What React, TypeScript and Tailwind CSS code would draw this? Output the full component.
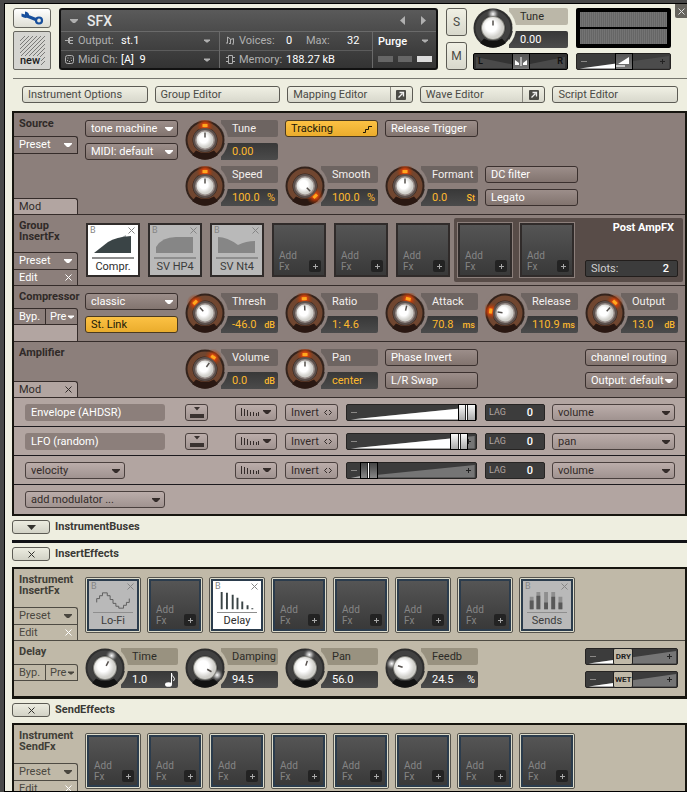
import { useId, useState } from 'react';
import type { ReactNode } from 'react';
import clsx from 'clsx';

const controlTones = {
  group: 'border-[#3a302e] bg-linear-to-b from-[#9c8e8a] to-[#82746f] text-white',
  mod: 'border-[#4a403e] bg-linear-to-b from-[#bbadaa] to-[#a09390] text-[#332b29]',
  cream: 'border-[#5c5b54] bg-linear-to-b from-[#f0f0e4] to-[#d8d8cc] text-[#4a4a45]',
  amber: 'border-[#4a3a20] bg-linear-to-b from-[#fcc244] to-[#eaac2c] text-[#201808]'
};

function Arrow({ className }: { className?: string }) {
  return (
    <svg className={clsx('h-1 w-2 shrink-0', className)} viewBox="0 0 8 4" fill="currentColor">
      <path d="M0 0h8v1L5 4H3L0 1z" />
    </svg>
  );
}

function Cross({ className }: { className?: string }) {
  return (
    <svg className={clsx('size-[7px] shrink-0', className)} viewBox="0 0 7 7" fill="none" stroke="currentColor">
      <path d="M.5.5l6 6M6.500.5l-6 6" />
    </svg>
  );
}

function Select({ label, options, tone, className }: {
  label: string;
  options: string[];
  tone: 'group' | 'mod';
  className?: string;
}) {
  return (
    <div className={clsx('relative h-[17px]', controlTones[tone], 'rounded-[3px] border', className)}>
      <select
        aria-label={label}
        className="block h-full w-full appearance-none bg-transparent pl-[5px] pr-3 leading-[15px] outline-none"
      >
        {options.map(o => <option key={o} className="text-black">{o}</option>)}
      </select>
      <Arrow className="pointer-events-none absolute right-1 top-[6px]" />
    </div>
  );
}

function PushButton({ children, tone, className, label }: {
  children: ReactNode;
  tone: keyof typeof controlTones;
  className?: string;
  label?: string;
}) {
  return (
    <button
      type="button"
      aria-label={label}
      className={clsx('flex h-[17px] items-center rounded-[3px] border px-[5px] text-left whitespace-nowrap', controlTones[tone], className)}
    >
      {children}
    </button>
  );
}

/* Rotary controls */

function Dial({ angle, dark }: { angle: number; dark?: boolean }) {
  const id = useId();
  return (
    <svg className="size-10" viewBox="0 0 40 40">
      <defs>
        <radialGradient id={`${id}g`}>
          <stop offset="0" stopColor={dark ? '#ffffff' : '#ff6a10'} />
          <stop offset="0.400" stopColor={dark ? '#b8b8b8' : '#d84008'} stopOpacity="0.800" />
          <stop offset="1" stopColor={dark ? '#444' : '#8a3a10'} stopOpacity="0" />
        </radialGradient>
        <radialGradient id={`${id}c`} cx="0.420" cy="0.420">
          <stop offset="0.500" stopColor="#ffffff" />
          <stop offset="1" stopColor="#d0cfca" />
        </radialGradient>
      </defs>
      <circle cx="20" cy="20" r="19.500" fill={dark ? '#2e2e2e' : '#33231c'} />
      <circle cx="20" cy="20" r="15" fill="none" stroke={dark ? '#414141' : '#704630'} strokeWidth="5" />
      <path d="M11 30.500L7 35q13 9.500 26 0l-4-4.500q-9 5-18 0z" fill={dark ? '#121212' : '#2a1812'} />
      <g transform={`rotate(${angle} 20 20)`}>
        <circle cx="20" cy="6" r={dark ? 6.5 : 9} fill={`url(#${id}g)`} />
        {!dark && <rect x="17.500" y="4" width="5" height="3" fill="#ffa81e" />}
      </g>
      <circle cx="20" cy="20" r="12" fill={dark ? '#85857f' : '#5c504c'} />
      <circle cx="20" cy="20" r={dark ? 11 : 10} fill={dark ? `url(#${id}c)` : '#968c88'} />
      {!dark && <circle cx="20" cy="20" r="8.500" fill={`url(#${id}c)`} />}
      <path d="M20 17.500v-5" stroke="#55504d" strokeWidth="1.500" transform={`rotate(${angle} 20 20)`} />
    </svg>
  );
}

interface KnobProps {
  name: string;
  value: string;
  unit?: ReactNode;
  angle: number;
  tone?: 'group' | 'rack' | 'master';
  className?: string;
}

function Knob({ name, value, unit, angle, tone = 'group', className }: KnobProps) {
  const id = useId();
  const group = tone === 'group';
  return (
    <div className={clsx('relative h-10 w-full', className)}>
      <div className="flex h-full flex-col justify-between pl-9">
        <label
          htmlFor={id}
          className={clsx('flex h-[17px] items-center rounded-r-xs pl-[11px]',
            group && 'bg-[#6d6461] text-[#f4f0ee]',
            tone === 'rack' && 'bg-[#999280] text-[#2c2b27]',
            tone === 'master' && 'bg-[#bbb7a8] text-[#2c2b27]')}
        >
          {name}
        </label>
        <output
          htmlFor={id}
          className={clsx('flex h-[17px] items-center justify-between rounded-r-xs bg-linear-to-b from-[#383838] to-[#4b4b4b] pl-[11px] pr-[3px] whitespace-nowrap',
            group ? 'text-[#fdb92e]' : 'text-white')}
        >
          {value}
          {unit && <span>{unit}</span>}
        </output>
      </div>
      <div
        className={clsx('absolute top-0 left-0 size-10 rounded-full',
          group && 'shadow-[0_0_0_3px_#8c7f7b]',
          tone === 'rack' && 'shadow-[0_0_0_3px_#c0b9a8]',
          tone === 'master' && 'shadow-[0_0_0_3px_#eeeee0]')}
      >
        <Dial angle={angle} dark={!group} />
        <input
          id={id}
          type="range"
          min={-145}
          max={145}
          defaultValue={angle}
          className="absolute inset-0 size-full cursor-pointer opacity-0"
        />
      </div>
    </div>
  );
}

const small = (text: string) => <span className="text-[9px] font-medium">{text}</span>;

/* Faders */

function Fader({ name, start, cap, children, flat }: {
  name: string;
  start: number;
  cap: string;
  children: ReactNode;
  flat?: boolean;
}) {
  const [pos, setPos] = useState(start);
  const edge = 4 + pos * 0.92;
  return (
    <div className="relative h-[17px] w-full rounded-xs border border-[#262423] bg-[#3c3c3c]">
      <svg className="block size-full" viewBox="0 0 100 15" preserveAspectRatio="none">
        <path d="M3 14.500L99 2v12.500z" fill={flat ? '#4c4c4c' : '#757575'} />
        <path d={`M3 14.500L${edge} ${14.5 - (edge - 3) * 0.13}V14.500z`} fill="#fff" />
      </svg>
      <svg className="absolute top-1 left-1 size-[7px]" viewBox="0 0 7 7" stroke="#8a8886">
        <path d="M0 3.500h6" />
      </svg>
      <svg className="absolute top-1 right-1 size-[7px]" viewBox="0 0 7 7" stroke="#222">
        <path d="M1 3.500h5M3.500 1v5" />
      </svg>
      <div
        className={clsx('absolute -inset-y-px flex -translate-x-1/2 items-center justify-center', cap)}
        style={{ left: `${pos}%` }}
      >
        {children}
      </div>
      <input
        type="range"
        aria-label={name}
        value={pos}
        onChange={e => setPos(Number(e.target.value))}
        className="absolute inset-0 size-full cursor-pointer opacity-0"
      />
    </div>
  );
}

function PanFader() {
  return (
    <div className="relative h-[17px] w-full rounded-xs border border-black bg-[#333]">
      <svg className="block size-full" viewBox="0 0 93 15" preserveAspectRatio="none">
        <path d="M2 3L46 12 91 3v11H2z" fill="#4a4a4a" />
      </svg>
      <span className="absolute top-0 left-1 text-[9px] leading-[15px] font-bold text-[#111]">L</span>
      <span className="absolute top-0 right-1 text-[9px] leading-[15px] font-bold text-[#111]">R</span>
      <div className="absolute -inset-y-px left-1/2 w-[18px] -translate-x-1/2 border border-black bg-linear-to-b from-[#555] to-[#777]">
        <svg className="block size-full" viewBox="0 0 16 15">
          <path d="M8 3v9" stroke="#fff" />
          <path d="M2 6l4 3v2H2zM14 6l-4 3v2h4z" fill="#fff" />
        </svg>
      </div>
      <input type="range" aria-label="Pan" className="absolute inset-0 size-full cursor-pointer opacity-0" />
    </div>
  );
}

/* Effect slots */

const art: Record<string, ReactNode> = {
  'Compr.': (
    <>
      <path d="M7 20L20 11 38 2v3l5-1v16z" fill="#aab0b0" />
      <path d="M6 20L20 9Q28 4 43 3v17z" fill="#3a4446" />
    </>
  ),
  'SV HP4': <path d="M6 20v-6Q12 4 26 4h17v16z" fill="#868686" />,
  'SV Nt4': <path d="M6 20V4Q15 4 26 12q8-4 17-4v12z" fill="#868686" />,
  'Lo-Fi': <path d="M8 14v-4h3V7h3V4h5v3h3v4h3v4h3v3h3v2h5v-3h3v-3h3v-4" fill="none" stroke="#5c5c5c" />,
  Delay: <path d="M9 3v18M14.500 4v17M20.500 6v15M25.500 9v12M30.500 13v8M36 17v4M41 20v1" fill="none" stroke="#3a4446" strokeWidth="2" />,
  Sends: (
    <>
      <path d="M9 8v13M16 3v18M24 3v18M31.500 3v18M39 8v13" fill="none" stroke="#8e8e8e" strokeWidth="4" />
      <path d="M9 12v9M16 7v14M24 14v7M31.500 8v13M39 14v7" fill="none" stroke="#585858" strokeWidth="4" />
    </>
  )
};

function Slot({ fx, lit, framed }: { fx?: string; lit?: boolean; framed?: boolean }) {
  const body = fx ? (
    <div className={clsx('relative flex h-full flex-col', lit ? 'bg-white text-[#2c2c2c]' : 'bg-[#b9b9b9] text-[#3c3c3c]')}>
      <button type="button" aria-label={`Bypass ${fx}`} className="absolute top-px left-[2px] text-[9px] leading-2 text-[#858585]">B</button>
      <button type="button" aria-label={`Remove ${fx}`} className="absolute top-[2px] right-[3px] text-[#858585]"><Cross /></button>
      <svg className="mt-2 h-6 w-full" viewBox="0 0 50 24">{art[fx]}</svg>
      <div className={clsx('mx-1 border-[#8e8e8e]', framed ? 'border-t' : 'border-t-2')} />
      <span className="flex-1 text-center leading-4">{fx}</span>
    </div>
  ) : (
    <button
      type="button"
      className="flex size-full items-end justify-between bg-linear-to-b from-[#555] to-[#393939] pr-[3px] pb-[3px] pl-[5px] text-left text-[10px] leading-[11px] text-[#858585]"
    >
      <span><span className="block">Add</span><span className="block">Fx</span></span>
      <span className="flex size-3 items-center justify-center rounded-xs bg-[#232323] text-[#a8a8a8]">
        <svg className="size-[7px]" viewBox="0 0 7 7" stroke="currentColor"><path d="M1 3.500h5M3.500 1v5" /></svg>
      </span>
    </button>
  );
  if (framed) {
    return (
      <div className="size-14 shrink-0 rounded-xs border border-[#55534c] bg-[#dddccb] p-px">
        <div className="size-full border-2 border-[#2b3c4d]">{body}</div>
      </div>
    );
  }
  return <div className="size-[54px] shrink-0 border-2 border-[#302b2a]">{body}</div>;
}

/* Section frame with the heading column on the left */

const edgeTones = {
  group: 'border-[#352c2a] text-white',
  rack: 'border-[#4e4b43] text-[#4a473f]'
};

function Section({ title, tone, head, foot, children }: {
  title: ReactNode;
  tone: 'group' | 'rack';
  head?: ReactNode;
  foot?: ReactNode;
  children: ReactNode;
}) {
  return (
    <section className={clsx('flex border-b last:border-b-0', edgeTones[tone])}>
      <div className="flex w-16 shrink-0 flex-col">
        <h3
          className={clsx('pt-[5px] pl-[5px] text-[11px] leading-[11px] font-bold whitespace-nowrap',
            tone === 'group' ? 'text-[#302a28]' : 'text-[#403e37]')}
        >
          {title}
        </h3>
        {head}
        <div className="mt-auto">{foot}</div>
      </div>
      <div className="min-w-0 flex-1">{children}</div>
    </section>
  );
}

function PresetTab({ tone }: { tone: 'group' | 'rack' }) {
  return (
    <div className={clsx('relative h-[17px] rounded-tr-[3px] border-t border-r', edgeTones[tone])}>
      <select aria-label="Preset" className="block size-full appearance-none bg-transparent pl-[5px] leading-4 outline-none">
        <option>Preset</option>
      </select>
      <Arrow className="pointer-events-none absolute top-[6px] right-[5px]" />
    </div>
  );
}

function EditTab({ tone }: { tone: 'group' | 'rack' }) {
  return (
    <button type="button" className={clsx('flex h-4 w-full items-center justify-between border-t border-r pr-[5px] pl-[5px]', edgeTones[tone])}>
      Edit
      <Cross className="text-white" />
    </button>
  );
}

function ModTab({ closable }: { closable?: boolean }) {
  return (
    <button type="button" className="flex h-4 w-full items-center justify-between rounded-tr-[3px] border-t border-r border-[#352c2a] bg-[#b2a5a1] px-[5px] text-[#302a28]">
      Mod
      {closable && <Cross />}
    </button>
  );
}

function BypassTabs({ tone }: { tone: 'group' | 'rack' }) {
  return (
    <div className={clsx('flex h-[17px] rounded-tr-[3px] border border-l-0', edgeTones[tone])}>
      <button type="button" className="w-8 border-r border-inherit pl-[5px] text-left">Byp.</button>
      <button type="button" className="flex flex-1 items-center justify-between pr-[3px] pl-1">
        Pre
        <Arrow className="w-[6px]" />
      </button>
    </div>
  );
}

function Controls({ children }: { children: ReactNode }) {
  return <div className="grid grid-cols-6 gap-x-[7px] gap-y-[6px] px-[7px] pt-[7px] pb-2">{children}</div>;
}

function Stack({ children, className }: { children: ReactNode; className?: string }) {
  return <div className={clsx('flex h-10 flex-col justify-between', className)}>{children}</div>;
}

/* Modulation routing rows */

interface Modulator {
  source: string;
  editable: boolean;
  amount: number;
  target: string;
}

const modulators: Modulator[] = [
  { source: 'Envelope (AHDSR)', editable: false, amount: 93, target: 'volume' },
  { source: 'LFO (random)', editable: false, amount: 87, target: 'pan' },
  { source: 'velocity', editable: true, amount: 17, target: 'volume' }
];

function ModRow({ mod }: { mod: Modulator }) {
  const lagId = useId();
  return (
    <div className="flex h-[29px] items-center border-b border-[#1c1a1e] pr-[10px] pl-[11px]">
      <div className="w-[140px] shrink-0">
        {mod.editable
          ? <Select label="Modulator source" tone="mod" options={[mod.source]} className="w-[100px]" />
          : <div className="h-[17px] rounded-[3px] bg-[#8c7f7b] pl-[6px] leading-[17px] text-white">{mod.source}</div>}
      </div>
      <div className="ml-5 w-[23px] shrink-0">
        {!mod.editable && (
          <PushButton tone="mod" label="Show modulator" className="w-full px-0!">
            <svg className="size-full" viewBox="0 0 21 15" fill="#3a3230">
              <path d="M8 2h6l-3 3.500zM4 9h14v4H4z" />
            </svg>
          </PushButton>
        )}
      </div>
      <PushButton tone="mod" label="Shaper" className="ml-[27px] w-[42px] shrink-0 justify-between">
        <svg className="h-2 w-[18px]" viewBox="0 0 18 8" stroke="currentColor">
          <path d="M.5 0v8M3.500 1v7M6.500 2v6M9.500 4v4M12.500 4v4M15.500 5v3M17.500 4v4" />
        </svg>
        <Arrow />
      </PushButton>
      <PushButton tone="mod" className="ml-2 w-[53px] shrink-0 justify-between">
        Invert
        <svg className="h-[7px] w-2" viewBox="0 0 8 7" fill="none" stroke="currentColor">
          <path d="M3 1L.5 3.500 3 6M5 1l2.500 2.500L5 6" />
        </svg>
      </PushButton>
      <div className="ml-2 min-w-0 flex-1">
        <Fader
          name={`${mod.source} amount`}
          start={mod.amount}
          cap={clsx('w-[18px] border border-black bg-linear-to-b', mod.amount > 50 ? 'from-[#fafafa] to-[#aaa]' : 'from-[#444] to-[#888]')}
        >
          <span className="h-full w-[3px] border-x border-[#222] bg-white" />
        </Fader>
      </div>
      <div className="ml-2 flex h-[17px] w-[60px] shrink-0 items-center rounded-xs border border-[#262423] bg-[#3c3c3c] px-[3px]">
        <label htmlFor={lagId} className="text-[9px] text-[#b2a5a1]">LAG</label>
        <input id={lagId} defaultValue="0" className="w-full min-w-0 bg-transparent pr-2 text-right font-medium text-white outline-none" />
      </div>
      <Select label="Modulation target" tone="mod" options={[mod.target]} className="ml-[7px] w-[123px] shrink-0" />
    </div>
  );
}

function RackHeading({ title, open }: { title: string; open?: boolean }) {
  return (
    <div className="flex items-center gap-[5px] pt-1 pb-[6px] pl-[7px]">
      <button
        type="button"
        aria-label={`Toggle ${title}`}
        className="flex h-[14px] w-[38px] items-center justify-center rounded-[3px] border border-[#5c5b54] bg-linear-to-b from-[#ecece0] to-[#d2d2c6] text-[#33322e]"
      >
        {open ? <Cross /> : <svg className="h-[5px] w-[9px]" viewBox="0 0 9 5" fill="currentColor"><path d="M0 0h9L4.500 5z" /></svg>}
      </button>
      <h2 className="leading-[14px] font-bold text-[#3a3935]">{title}</h2>
    </div>
  );
}

function Header() {
  return (
    <header className="ml-2 flex h-[75px] border-b border-[#77776f] pt-1 pr-4">
      <div className="flex h-[62px] w-[38px] shrink-0 flex-col gap-[3px]">
        <button type="button" aria-label="Edit instrument" className="flex h-5 items-center justify-center rounded-[3px] border border-[#66665f] bg-linear-to-b from-white to-[#deded4]">
          <svg className="h-[14px] w-6" viewBox="0 0 24 14" fill="none" stroke="#174f9c">
            <path d="M7 5l10 4" strokeWidth="3" />
            <circle cx="19" cy="9.500" r="3" strokeWidth="2.200" />
            <path d="M1.500 2.500L5 3.500 5 .5Q9.500 1 9 5 6.500 8.500 1.500 5.500z" fill="#174f9c" stroke="none" />
          </svg>
        </button>
        <button type="button" className="relative h-[39px] rounded-xs border border-[#66665f] bg-[#d4d4d0] text-[#1c1c1c]">
          <svg className="absolute top-1 left-[6px] h-[29px] w-[26px]" viewBox="0 0 26 29" stroke="#7a7a78">
            <path d="M0 5l5-5M0 9l9-9M0 13L13 0M0 17L17 0M0 21L21 0M4 21L25 0M8 21L25 4M12 21L25 8M16 21l9-9M20 21l5-5M21 25l4-4M21 29l4-4" />
          </svg>
          <span className="absolute bottom-[3px] left-[6px] bg-[#d4d4d0] leading-[10px] font-medium">new</span>
        </button>
      </div>

      <div className="ml-2 flex h-[62px] min-w-0 flex-1 flex-col rounded-[3px] border-2 border-[#111] bg-linear-to-b from-[#5a5a5a] to-[#333] text-[#b0b0b0]">
        <div className="flex h-[21px] items-center pr-[10px] pl-[9px]">
          <Arrow />
          <h1 className="ml-[9px] text-[14px] leading-4 font-medium text-[#e8e8e8]">SFX</h1>
          <button type="button" aria-label="Previous instrument" className="ml-auto">
            <svg className="h-[9px] w-[5px]" viewBox="0 0 5 9" fill="currentColor"><path d="M5 0v9L0 4.500z" /></svg>
          </button>
          <button type="button" aria-label="Next instrument" className="ml-4">
            <svg className="h-[9px] w-[5px]" viewBox="0 0 5 9" fill="currentColor"><path d="M0 0v9l5-4.500z" /></svg>
          </button>
        </div>
        <div className="flex flex-1 border-t border-[#6a6a6a]">
          <div className="flex min-w-0 flex-1 flex-col">
            <div className="relative flex flex-1 items-center border-b border-[#5c5c5c] pl-1">
              <svg className="size-[9px]" viewBox="0 0 9 9" stroke="currentColor" fill="none">
                <path d="M0 4.500h3M8 1.500H4.500v6H8M4.500 4.500H8M3.500 2v5" />
              </svg>
              <label htmlFor="output" className="ml-1 w-[43px]">Output:</label>
              <select id="output" className="min-w-0 flex-1 appearance-none text-white outline-none"><option>st.1</option></select>
              <Arrow className="pointer-events-none absolute top-[7px] right-[9px] w-[6px]" />
            </div>
            <div className="relative flex flex-1 items-center pl-1">
              <svg className="size-[9px]" viewBox="0 0 9 9" fill="none" stroke="currentColor">
                <rect x=".5" y=".5" width="8" height="8" rx="2" />
                <path d="M3 2.500v1M6 2.500v1M2.500 5v1M6.500 5v1M4.500 6v1" />
              </svg>
              <label htmlFor="midi" className="ml-1 w-[43px] whitespace-nowrap">Midi Ch:</label>
              <select id="midi" className="min-w-0 flex-1 appearance-none text-white outline-none"><option>[A]&nbsp; 9</option></select>
              <Arrow className="pointer-events-none absolute top-[7px] right-[9px] w-[6px]" />
            </div>
          </div>
          <div className="flex w-[153px] flex-col border-l border-[#6a6a6a]">
            <div className="flex flex-1 items-center border-b border-[#5c5c5c] pl-[6px]">
              <svg className="size-[9px]" viewBox="0 0 9 9" stroke="currentColor" fill="none">
                <path d="M1.500 7V1l3 2v4M4.500 3.500l3-1v5M0 7h2M3 7.500h2M6 8h2" />
              </svg>
              <span className="ml-1 w-[47px]">Voices:</span>
              <span className="w-5 text-white">0</span>
              <span className="w-[41px]">Max:</span>
              <span className="text-white">32</span>
            </div>
            <div className="flex flex-1 items-center pl-[6px]">
              <svg className="size-[9px]" viewBox="0 0 9 9" stroke="currentColor" fill="none">
                <path d="M2.500.5h4v8h-4zM0 2.500h2M0 6.500h2M7 2.500h2M7 6.500h2" />
              </svg>
              <span className="ml-1 w-[47px]">Memory:</span>
              <span className="text-white">188.27 kB</span>
            </div>
          </div>
          <div className="flex w-[64px] flex-col border-l border-[#6a6a6a] pr-1 pl-[5px]">
            <button type="button" className="flex flex-1 items-center justify-between pr-1 font-medium text-white">
              Purge
              <Arrow className="w-[6px] text-[#b0b0b0]" />
            </button>
            <div className="flex flex-1 items-center gap-[5px]">
              <span className="h-[6px] flex-1 bg-[#666]" />
              <span className="h-[6px] flex-1 bg-[#666]" />
              <span className="h-[6px] flex-1 bg-[#dcdcdc]" />
            </div>
          </div>
        </div>
      </div>

      <div className="ml-2 flex h-[62px] w-[21px] shrink-0 flex-col justify-between text-[12px]">
        <PushButton tone="cream" label="Solo" className="h-[28px]! justify-center px-0!">S</PushButton>
        <PushButton tone="cream" label="Mute" className="h-[28px]! justify-center px-0!">M</PushButton>
      </div>

      <div className="ml-[6px] flex h-[62px] w-[95px] shrink-0 flex-col justify-between">
        <Knob name="Tune" value="0.00" angle={0} tone="master" />
        <PanFader />
      </div>

      <div className="ml-2 flex h-[62px] w-[95px] shrink-0 flex-col justify-between">
        <div className="flex h-10 flex-col gap-[2px] rounded-xs border-4 border-black bg-black">
          <div className="flex-1 bg-[repeating-linear-gradient(90deg,#747474_0_1px,#666_1px_2px)]" />
          <div className="flex-1 bg-[repeating-linear-gradient(90deg,#747474_0_1px,#666_1px_2px)]" />
        </div>
        <Fader name="Volume" start={50} flat cap="w-[18px] border border-black bg-linear-to-b from-[#555] to-[#777]">
          <svg className="size-full" viewBox="0 0 16 15"><path d="M2 10l11-7v7z" fill="#fff" /><path d="M0 11h9v2H0z" fill="#ccc" /></svg>
        </Fader>
      </div>
    </header>
  );
}

const editors = [
  { name: 'Instrument Options' },
  { name: 'Group Editor' },
  { name: 'Mapping Editor', external: true },
  { name: 'Wave Editor', external: true },
  { name: 'Script Editor' }
];

export default function App() {
  return (
    <div className="h-screen overflow-hidden bg-[#484848] pt-[3px] pl-1 font-['Roboto',sans-serif] text-[11px] leading-[13px]">
      <main className="relative h-full overflow-hidden border-t border-b border-l border-black bg-[#eeeee0]">
        <button type="button" aria-label="Close" className="absolute top-0 right-0 flex h-[14px] w-3 items-center justify-center rounded-bl-xs bg-[#65635d] text-[#ddd]">
          <Cross />
        </button>

        <Header />

        <nav className="flex gap-[7px] pt-[7px] pr-[9px] pb-2 pl-[17px]">
          {editors.map(e => (
            <PushButton key={e.name} tone="cream" className="min-w-0 flex-1 justify-between pr-0!">
              {e.name}
              {e.external && (
                <span className="flex h-full w-[22px] items-center justify-center border-l border-[#8a8980]">
                  <svg className="size-[10px]" viewBox="0 0 10 10">
                    <rect width="10" height="10" rx="1" fill="#4a4a45" />
                    <path d="M2.500 7.500l4-4M3.500 2.500h4v4" stroke="#eee" strokeWidth="1.300" fill="none" />
                  </svg>
                </span>
              )}
            </PushButton>
          ))}
        </nav>

        {/* Group level modules */}
        <div className="ml-[7px] border-2 border-[#16150f] bg-[#8c7f7b]">
          <div>
            <Section
              title="Source"
              tone="group"
              head={<div className="mt-[7px]"><PresetTab tone="group" /><div className="border-t border-[#352c2a]" /></div>}
              foot={<ModTab />}
            >
              <Controls>
                <Stack>
                  <Select label="Source mode" tone="group" options={['tone machine']} />
                  <Select label="MIDI" tone="group" options={['MIDI: default']} />
                </Stack>
                <Knob name="Tune" value="0.00" angle={0} />
                <PushButton tone="amber" className="justify-between">
                  Tracking
                  <svg className="h-2 w-[9px]" viewBox="0 0 9 8" fill="none" stroke="currentColor"><path d="M0 7.500h2.500v-3h3v-3H9" /></svg>
                </PushButton>
                <PushButton tone="group">Release Trigger</PushButton>
                <Knob className="col-start-2" name="Speed" value="100.0" unit="%" angle={0} />
                <Knob name="Smooth" value="100.0" unit="%" angle={135} />
                <Knob name="Formant" value="0.0" unit={small('St')} angle={0} />
                <Stack>
                  <PushButton tone="group">DC filter</PushButton>
                  <PushButton tone="group">Legato</PushButton>
                </Stack>
              </Controls>
            </Section>

            <Section
              title={<>Group<br />InsertFx</>}
              tone="group"
              foot={<><PresetTab tone="group" /><EditTab tone="group" /></>}
            >
              <div className="flex h-[70px] pl-2">
                <div className="flex gap-2 pt-2">
                  <Slot fx="Compr." lit />
                  <Slot fx="SV HP4" />
                  <Slot fx="SV Nt4" />
                  <Slot />
                  <Slot />
                  <Slot />
                </div>
                <div className="my-[3px] mr-[2px] ml-1 flex min-w-0 flex-1 gap-2 rounded-xs bg-[#584c48] pt-[5px] pr-[5px] pl-1">
                  <div className="size-[54px] shrink-0 outline outline-[#8c7f7b]"><Slot /></div>
                  <div className="size-[54px] shrink-0 outline outline-[#8c7f7b]"><Slot /></div>
                  <div className="flex h-[54px] min-w-0 flex-1 flex-col justify-between pl-[3px]">
                    <h4 className="pr-1 text-right leading-[10px] font-bold text-white">Post AmpFX</h4>
                    <div className="flex h-[17px] items-center rounded-xs border border-[#221e1c] bg-[#3c3c3c] pr-2 pl-[5px]">
                      <label htmlFor="slots" className="text-[#d0d0d0]">Slots:</label>
                      <input id="slots" defaultValue="2" className="w-full min-w-0 bg-transparent text-right font-medium text-white outline-none" />
                    </div>
                  </div>
                </div>
              </div>
            </Section>

            <Section
              title="Compressor"
              tone="group"
              head={
                <div className="mt-[6px] flex flex-1 flex-col">
                  <BypassTabs tone="group" />
                  <div className="flex-1 border-r border-[#352c2a] bg-[#b2a5a1]" />
                </div>
              }
            >
              <Controls>
                <Stack>
                  <Select label="Compressor mode" tone="group" options={['classic']} />
                  <PushButton tone="amber">St. Link</PushButton>
                </Stack>
                <Knob name="Thresh" value="-46.0" unit={small('dB')} angle={-43} />
                <Knob name="Ratio" value="1: 4.6" angle={-3} />
                <Knob name="Attack" value="70.8" unit={small('ms')} angle={13} />
                <Knob name="Release" value="110.9" unit={small('ms')} angle={-82} />
                <Knob name="Output" value="13.0" unit={small('dB')} angle={43} />
              </Controls>
            </Section>

            <Section title="Amplifier" tone="group" foot={<ModTab closable />}>
              <Controls>
                <Knob className="col-start-2" name="Volume" value="0.0" unit={small('dB')} angle={35} />
                <Knob name="Pan" value="center" angle={0} />
                <Stack>
                  <PushButton tone="group">Phase Invert</PushButton>
                  <PushButton tone="group">L/R Swap</PushButton>
                </Stack>
                <Stack className="col-start-6">
                  <PushButton tone="group">channel routing</PushButton>
                  <Select label="Amplifier output" tone="group" options={['Output: default']} />
                </Stack>
              </Controls>
            </Section>
          </div>

          <div className="border-t border-[#352c2a] bg-[#b2a5a1]">
            {modulators.map(mod => <ModRow key={`${mod.source}-${mod.target}`} mod={mod} />)}
            <div className="flex h-[29px] items-center pl-[11px]">
              <Select label="Add modulator" tone="mod" options={['add modulator ...']} className="w-[140px]" />
            </div>
          </div>
        </div>

        <RackHeading title="InstrumentBuses" />
        <div className="ml-[7px] border-t-3 border-[#111216]" />

        <RackHeading title="InsertEffects" open />
        <div className="ml-[7px] border-2 border-b-3 border-[#16150f] bg-[#c0b9a8]">
          <Section
            title={<>Instrument<br />InsertFx</>}
            tone="rack"
            foot={<><PresetTab tone="rack" /><EditTab tone="rack" /></>}
          >
            <div className="flex h-[71px] gap-[6px] pt-2 pl-[7px]">
              <Slot framed fx="Lo-Fi" />
              <Slot framed />
              <Slot framed fx="Delay" lit />
              <Slot framed />
              <Slot framed />
              <Slot framed />
              <Slot framed />
              <Slot framed fx="Sends" />
            </div>
          </Section>
          <Section title="Delay" tone="rack" head={<div className="mt-[7px]"><BypassTabs tone="rack" /></div>}>
            <Controls>
              <Knob
                tone="rack"
                name="Time"
                value="1.0"
                angle={28}
                unit={
                  <svg className="h-[15px] w-[10px]" viewBox="0 0 10 15">
                    <ellipse cx="3.500" cy="12.500" rx="3.500" ry="2.300" fill="#fff" />
                    <path d="M6.500 12V1q0 2.500 2 4t0 4" fill="none" stroke="#fff" />
                  </svg>
                }
              />
              <Knob tone="rack" name="Damping" value="94.5" angle={120} />
              <Knob tone="rack" name="Pan" value="56.0" angle={18} />
              <Knob tone="rack" name="Feedb" value="24.5" unit="%" angle={-72} />
              <Stack className="col-start-6">
                <Fader name="Dry" start={41} cap="w-5 rounded-xs border border-[#222] bg-[#c0b9a8] text-[8px] font-bold text-[#222]">DRY</Fader>
                <Fader name="Wet" start={41} cap="w-5 rounded-xs border border-[#222] bg-[#c0b9a8] text-[8px] font-bold text-[#222]">WET</Fader>
              </Stack>
            </Controls>
          </Section>
        </div>

        <RackHeading title="SendEffects" open />
        <div className="ml-[7px] border-2 border-[#16150f] bg-[#c0b9a8]">
          <Section
            title={<>Instrument<br />SendFx</>}
            tone="rack"
            foot={<><PresetTab tone="rack" /><EditTab tone="rack" /></>}
          >
            <div className="flex h-[71px] gap-[6px] pt-2 pl-[7px]">
              {Array.from({ length: 8 }, (_, i) => <Slot key={i} framed />)}
            </div>
          </Section>
        </div>
      </main>
    </div>
  );
}
